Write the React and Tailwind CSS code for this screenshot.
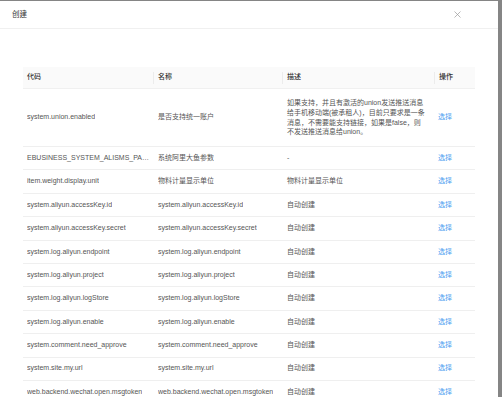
const rows = [
  { code: "item.weight.display.unit", name: "物料计量显示单位", desc: "物料计量显示单位" },
  { code: "system.aliyun.accessKey.id", name: "system.aliyun.accessKey.id", desc: "自动创建" },
  { code: "system.aliyun.accessKey.secret", name: "system.aliyun.accessKey.secret", desc: "自动创建" },
  { code: "system.log.aliyun.endpoint", name: "system.log.aliyun.endpoint", desc: "自动创建" },
  { code: "system.log.aliyun.project", name: "system.log.aliyun.project", desc: "自动创建" },
  { code: "system.log.aliyun.logStore", name: "system.log.aliyun.logStore", desc: "自动创建" },
  { code: "system.log.aliyun.enable", name: "system.log.aliyun.enable", desc: "自动创建" },
  { code: "system.comment.need_approve", name: "system.comment.need_approve", desc: "自动创建" },
  { code: "system.site.my.url", name: "system.site.my.url", desc: "自动创建" },
  { code: "web.backend.wechat.open.msgtoken", name: "web.backend.wechat.open.msgtoken", desc: "自动创建" },
];

const font = { fontFamily: '"Liberation Sans", "Noto Sans CJK SC", sans-serif' };

function HeadCell({ children, className, divider }) {
  return (
    <div className={`relative flex items-center px-[4px] ${className}`}>
      {children}
      {divider ? (
        <span className="absolute right-0 top-1/2 h-[12px] w-px -translate-y-1/2 bg-[#ececec]" />
      ) : null}
    </div>
  );
}

function Row({ code, name, desc, tall }) {
  return (
    <div className={`flex border-b border-[#efefef] ${tall ? "h-[58px]" : "h-[23.4px]"}`}>
      <div className="flex w-[131px] items-center overflow-hidden px-[4px]">
        <span className="truncate">{code}</span>
      </div>
      <div className="flex w-[129px] items-center overflow-hidden px-[4px]">
        <span className="truncate">{name}</span>
      </div>
      <div className="flex w-[152px] items-center px-[4px]">{desc}</div>
      <div className="flex flex-1 items-center px-[3px] text-[#4a9ef0]">选择</div>
    </div>
  );
}

export default function App() {
  return (
    <div className="h-[397px] w-[502px] overflow-hidden bg-[#858585] pr-[4px] pt-px" style={font}>
      <div className="h-full bg-white">
        <div className="flex h-[28px] items-center justify-between border-b border-[#f0f0f0] pl-[12px] pr-[37px]">
          <span className="text-[7.5px] text-[#333]">创建</span>
          <svg width="7" height="7" viewBox="0 0 7 7" className="text-[#999]">
            <path d="M0.5 0.5L6.5 6.5M6.5 0.5L0.5 6.5" stroke="currentColor" strokeWidth="0.7" />
          </svg>
        </div>
        <div className="ml-[23px] mt-[38px] w-[452px] text-[7px] text-[#555]">
          <div className="flex h-[22px] bg-[#fafafa] text-[#333] font-medium border-b border-[#f0f0f0]">
            <HeadCell className="w-[131px]" divider>代码</HeadCell>
            <HeadCell className="w-[129px]" divider>名称</HeadCell>
            <HeadCell className="w-[152px]" divider>描述</HeadCell>
            <HeadCell className="flex-1 px-[3px]">操作</HeadCell>
          </div>
          <Row
            tall
            code="system.union.enabled"
            name="是否支持统一账户"
            desc={
              <div className="leading-[9.7px]">
                如果支持，并且有激活的union发送推送消息
                <br />
                给手机移动端(被承租人)，目前只要求是一条
                <br />
                消息，不需要能支持链接，如果是false，则
                <br />
                不发送推送消息给union。
              </div>
            }
          />
          <Row code="EBUSINESS_SYSTEM_ALISMS_PARAMS" name="系统阿里大鱼参数" desc="-" />
          {rows.map((r) => (
            <Row key={r.code} {...r} />
          ))}
        </div>
      </div>
    </div>
  );
}
